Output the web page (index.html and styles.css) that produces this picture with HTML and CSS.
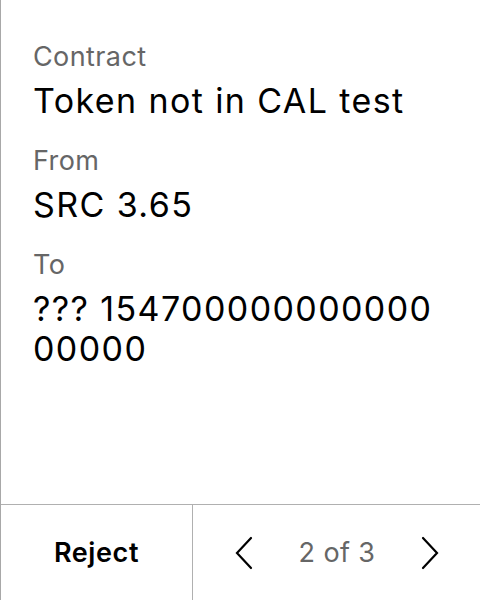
FILE: index.html
```html
<!DOCTYPE html>
<html>
<head>
<meta charset="utf-8">
<link rel="stylesheet" href="styles.css">
</head>
<body>
<div class="screen">
  <div class="content">
    <div class="field">
      <div class="label">Contract</div>
      <div class="value">Token not in CAL test</div>
    </div>
    <div class="field">
      <div class="label">From</div>
      <div class="value">SRC 3.65</div>
    </div>
    <div class="field">
      <div class="label">To</div>
      <div class="value">??? 15470000000000000000</div>
    </div>
  </div>
  <div class="footer">
    <div class="reject">Reject</div>
    <div class="pager">
      <svg class="chev" width="20" height="34" viewBox="0 0 20 34"><path d="M17 2 L3 17 L17 32" fill="none" stroke="#000" stroke-width="2.2" stroke-linecap="round" stroke-linejoin="miter"/></svg>
      <span class="count">2 of 3</span>
      <svg class="chev" width="20" height="34" viewBox="0 0 20 34"><path d="M3 2 L17 17 L3 32" fill="none" stroke="#000" stroke-width="2.2" stroke-linecap="round" stroke-linejoin="miter"/></svg>
    </div>
  </div>
</div>
</body>
</html>
```
FILE: styles.css
```css
html, body {
  margin: 0;
  padding: 0;
  background: #fff;
}
.screen {
  width: 480px;
  height: 600px;
  box-sizing: border-box;
  border-left: 1px solid #a8a8a8;
  display: flex;
  flex-direction: column;
  font-family: Inter, "Noto Sans", sans-serif;
  color: #000;
}
.content {
  flex: 1;
  padding: 39px 32px 0 32px;
  display: flex;
  flex-direction: column;
  gap: 22px;
}
.field {
  display: flex;
  flex-direction: column;
  gap: 6px;
}
.label {
  font-size: 27px;
  line-height: 36px;
  color: #666;
  letter-spacing: 0.4px;
}
.value {
  font-size: 34px;
  line-height: 40px;
  color: #000;
  letter-spacing: 1.4px;
  word-break: break-all;
}
.footer {
  height: 96px;
  box-sizing: border-box;
  border-top: 1px solid #b0b0b0;
  display: flex;
}
.reject {
  width: 192px;
  box-sizing: border-box;
  border-right: 1px solid #b0b0b0;
  display: flex;
  align-items: center;
  justify-content: center;
  font-size: 27px;
  font-weight: 600;
  letter-spacing: 0.6px;
}
.pager {
  flex: 1;
  display: flex;
  align-items: center;
  justify-content: space-between;
  padding: 0 40px 0 41px;
}
.count {
  font-size: 27px;
  color: #666;
  letter-spacing: 0.4px;
}
.chev {
  display: block;
}
```
